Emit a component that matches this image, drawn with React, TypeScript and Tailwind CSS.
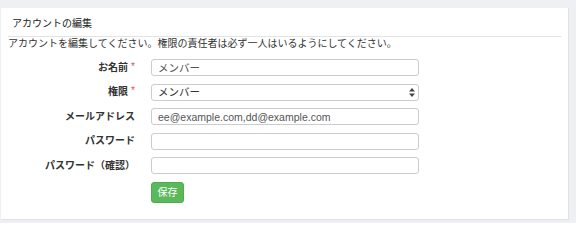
import React from 'react'

const font = { fontFamily: '"Liberation Sans", "Noto Sans CJK JP", sans-serif' }

const Label: React.FC<{ text: string; required?: boolean }> = ({ text, required }) => (
  <div className="flex h-[17px] items-center justify-end text-[10px] font-bold leading-[12px] text-[#333]">
    <span>{text}</span>
    {required && <span className="ml-[3px] -mt-[2px] text-[10px] font-normal text-[#d9534f]">*</span>}
  </div>
)

const TextInput: React.FC<{ value?: string; type?: string }> = ({ value = '', type = 'text' }) => (
  <input
    type={type}
    defaultValue={value}
    className="block h-[17px] w-[268px] rounded-[3px] border border-[#ccc] bg-white px-[6px] text-[10.5px] leading-[15px] text-[#555] outline-none"
    style={font}
  />
)

export default function App() {
  return (
    <div className="min-h-[223px] bg-[#eef0f4] pl-[1px] pr-[7px] pt-[8px] pb-[3px]" style={font}>
      <div className="h-[212px] border-r border-b border-[#dfe1e6] bg-white px-[7px]">
        {/* Header */}
        <div className="border-b border-[#e3e3e3] pl-[4px] pt-[10px] pb-[6px] text-[10px] leading-[12px] text-[#222]">
          アカウントの編集
        </div>
        <p className="pt-[1px] text-[10px] leading-[12px] text-[#333]">
          アカウントを編集してください。権限の責任者は必ず一人はいるようにしてください。
        </p>

        {/* Form */}
        <div className="mt-[9px] grid grid-cols-[127px_268px] gap-x-[16px] gap-y-[7.5px]">
          <Label text="お名前" required />
          <TextInput value="メンバー" />

          <Label text="権限" required />
          <div className="relative flex h-[17px] w-[268px]">
            <select
              defaultValue="member"
              className="block h-[17px] w-full appearance-none rounded-[3px] border border-[#ccc] bg-white py-0 pl-[6px] text-[10.5px] leading-[15px] text-[#333] outline-none"
              style={font}
            >
              <option value="member">メンバー</option>
              <option value="admin">管理者</option>
            </select>
            <svg className="pointer-events-none absolute right-[4px] top-[4px]" width="6" height="9" viewBox="0 0 6 9">
              <path d="M3 0 L6 3.5 H0 Z" fill="#444" />
              <path d="M3 9 L6 5.5 H0 Z" fill="#444" />
            </svg>
          </div>

          <Label text="メールアドレス" />
          <TextInput value="ee@example.com,dd@example.com" />

          <Label text="パスワード" />
          <TextInput type="password" />

          <Label text="パスワード（確認）" />
          <TextInput type="password" />

          <div />
          <div className="pt-[0.5px]">
            <button className="block h-[21px] w-[33px] rounded-[3px] border border-[#4cae4c] bg-[#5cb85c] text-[10px] leading-[12px] text-white">
              保存
            </button>
          </div>
        </div>
      </div>
    </div>
  )
}
